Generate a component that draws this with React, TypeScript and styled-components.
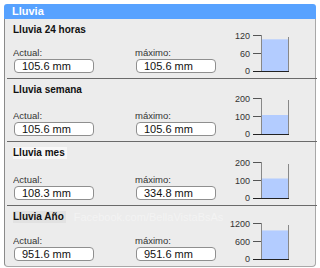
import styled, { createGlobalStyle } from "styled-components";

const GlobalStyle = createGlobalStyle`
  html, body {
    margin: 0;
    padding: 0;
    background: #ffffff;
  }
  body {
    font-family: "Liberation Sans", Arial, sans-serif;
    color: #111;
  }
`;

type Rain = {
  title: string;
  actual: string;
  max: string;
  scale: number;
  value: number;
  height: number;
  shade?: string;
  watermark?: boolean;
};

const rows: Rain[] = [
  { title: "Lluvia 24 horas", actual: "105.6 mm", max: "105.6 mm", scale: 120, value: 105.6, height: 60 },
  { title: "Lluvia semana", actual: "105.6 mm", max: "105.6 mm", scale: 200, value: 105.6, height: 63 },
  { title: "Lluvia mes", actual: "108.3 mm", max: "334.8 mm", scale: 200, value: 108.3, height: 64, shade: "#f7f7f7" },
  { title: "Lluvia Año", actual: "951.6 mm", max: "951.6 mm", scale: 1200, value: 951.6, height: 60, shade: "#e2e2e2", watermark: true },
];

const Gauge = ({ scale, value }: { scale: number; value: number }) => {
  const top = 6;
  const bottom = 42;
  const fill = ((bottom - top) * value) / scale;
  const labels = [
    { v: scale, y: top + 3.5 },
    { v: scale / 2, y: (top + bottom) / 2 + 3.5 },
    { v: 0, y: bottom + 2.5 },
  ];
  return (
    <GaugeSvg width="60" height="46" viewBox="0 0 60 46">
      <rect x="31" y={bottom - fill} width="27" height={fill} fill="#b3ccff" />
      {labels.map((l, i) => (
        <text key={i} x="20" y={l.y} textAnchor="end" fontSize="9" fill="#333">
          {l.v}
        </text>
      ))}
      <line x1="23" x2="31" y1={top + 0.5} y2={top + 0.5} stroke="#555" strokeWidth="1" />
      <line x1="23" x2="31" y1={(top + bottom) / 2 + 0.5} y2={(top + bottom) / 2 + 0.5} stroke="#555" strokeWidth="1" />
      <line x1="31.5" x2="31.5" y1={top} y2={bottom + 1} stroke="#888" strokeWidth="1" />
      <line x1="58.5" x2="58.5" y1={top + 2} y2={bottom + 1} stroke="#888" strokeWidth="1" />
      <line x1="23" x2="59" y1={bottom + 0.5} y2={bottom + 0.5} stroke="#222" strokeWidth="1" />
    </GaugeSvg>
  );
};

export default function App() {
  return (
    <>
      <GlobalStyle />
      <Panel>
        <Header>Lluvia</Header>
        <Body>
          {rows.map((r) => (
            <Section key={r.title} $height={r.height}>
              <Left>
                <TitleRow>
                  <Title $shade={r.shade}>{r.title}</Title>
                  {r.watermark && <Watermark>Facebook.com/BellaVistaBsAs</Watermark>}
                </TitleRow>
                <Fields>
                  <Field>
                    <Label>Actual:</Label>
                    <Value>{r.actual}</Value>
                  </Field>
                  <Field>
                    <Label>máximo:</Label>
                    <Value>{r.max}</Value>
                  </Field>
                </Fields>
              </Left>
              <Gauge scale={r.scale} value={r.value} />
            </Section>
          ))}
        </Body>
      </Panel>
    </>
  );
}

const Panel = styled.div`
  margin: 4px 0 0 4px;
  width: 312px;
`;

const Header = styled.div`
  height: 15px;
  line-height: 15px;
  background: #57a2ff;
  color: #fff;
  font-weight: bold;
  font-size: 11px;
  padding-left: 8px;
  border-radius: 3px 3px 0 0;
`;

const Body = styled.div`
  background: #ececec;
  border: 1px solid #a8a8a8;
  border-top: none;
  border-left-color: #8a8a8a;
  border-radius: 0 0 4px 4px;
  padding-left: 2px;
`;

const Section = styled.div<{ $height: number }>`
  display: flex;
  height: ${(p) => p.$height}px;
  box-sizing: border-box;
  border-bottom: 1px solid #6a6a6a;
  margin-right: -2px;
  padding: 5px 27px 5px 6px;

  &:last-child {
    border-bottom: none;
  }
`;

const Left = styled.div`
  flex: 1;
  min-width: 0;
  display: flex;
  flex-direction: column;
  justify-content: space-between;
  overflow: hidden;
`;

const TitleRow = styled.div`
  display: flex;
  align-items: center;
  height: 12px;
  white-space: nowrap;
`;

const Title = styled.div<{ $shade?: string }>`
  font-size: 10px;
  font-weight: bold;
  line-height: 12px;
  padding: 0 2px 0 1px;
  margin-left: -1px;
  background: ${(p) => p.$shade ?? "transparent"};
`;

const Watermark = styled.span`
  margin-left: 8px;
  font-size: 11px;
  color: #f3f3f3;
`;

const Fields = styled.div`
  display: flex;
`;

const Field = styled.div`
  width: 122px;
  display: flex;
  flex-direction: column;
  gap: 1px;

  &:last-child {
    width: auto;
  }
`;

const Label = styled.div`
  font-size: 9.5px;
  line-height: 11px;
  color: #333;
`;

const Value = styled.div`
  width: 80px;
  height: 14px;
  box-sizing: border-box;
  margin-left: 1px;
  background: #fff;
  border: 1px solid #8f8f8f;
  border-radius: 4px;
  font-size: 11px;
  line-height: 12px;
  padding-left: 7px;
  color: #111;
`;

const GaugeSvg = styled.svg`
  display: block;
  flex-shrink: 0;
  align-self: flex-end;
  margin-bottom: -2px;
  font-family: "Liberation Sans", Arial, sans-serif;
`;
